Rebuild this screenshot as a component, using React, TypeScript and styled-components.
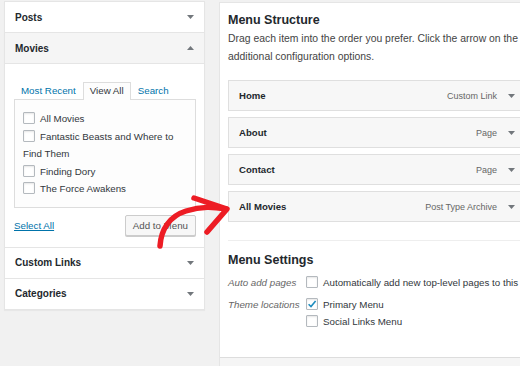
import React from "react";
import styled, { createGlobalStyle } from "styled-components";

const GlobalStyle = createGlobalStyle`
  body {
    margin: 0;
    background: #f1f1f1;
    font-family: "Liberation Sans", Arial, sans-serif;
    color: #23282d;
    overflow: hidden;
  }
`;

const Page = styled.div`
  position: relative;
  display: flex;
  align-items: flex-start;
  padding: 1px 0 0 4px;
  height: 366px;
  box-sizing: border-box;
`;

const Sidebar = styled.div`
  flex: none;
  width: 201px;
  background: #fff;
  border: 1px solid #e5e5e5;
  box-shadow: 0 1px 1px rgba(0, 0, 0, 0.04);
  box-sizing: border-box;
`;

const SectionHeader = styled.div<{ $open?: boolean; $last?: boolean }>`
  display: flex;
  align-items: center;
  justify-content: space-between;
  height: 30px;
  padding: 0 10px;
  font-size: 10px;
  font-weight: bold;
  color: #23282d;
  background: ${(p) => (p.$open ? "#f5f5f5" : "#fff")};
  border-bottom: ${(p) => (p.$last ? "none" : "1px solid #e5e5e5")};
`;

const SectionBody = styled.div`
  padding: 18px 8px 11px 9px;
  border-bottom: 1px solid #e5e5e5;
`;

const TabList = styled.div`
  display: flex;
  margin-bottom: -1px;
`;

const Tab = styled.span<{ $active?: boolean }>`
  position: relative;
  z-index: 1;
  height: 18px;
  box-sizing: border-box;
  padding: 0 6px;
  line-height: 16px;
  font-size: 9.75px;
  border: 1px solid ${(p) => (p.$active ? "#ddd" : "transparent")};
  border-bottom: none;
  background: ${(p) => (p.$active ? "#fdfdfd" : "transparent")};
  color: ${(p) => (p.$active ? "#32373c" : "#0073aa")};
`;

const TabPanel = styled.ul`
  margin: 0;
  list-style: none;
  padding: 10px 8px 9px;
  border: 1px solid #ddd;
  background: #fdfdfd;
`;

const ListItem = styled.li`
  font-size: 9.75px;
  line-height: 17.5px;
  color: #32373c;
`;

const Box = styled.span`
  display: inline-block;
  position: relative;
  width: 12px;
  height: 12px;
  box-sizing: border-box;
  margin-right: 5px;
  vertical-align: -2px;
  border: 1px solid #b4b9be;
  border-radius: 1px;
  background: #fff;
  box-shadow: inset 0 1px 2px rgba(0, 0, 0, 0.1);
`;

const Actions = styled.div`
  display: flex;
  align-items: center;
  justify-content: space-between;
  margin-top: 7px;
`;

const SelectAll = styled.a`
  font-size: 9.75px;
  color: #0073aa;
  text-decoration: underline;
`;

const Button = styled.button`
  height: 21px;
  padding: 0 7px;
  font-family: inherit;
  font-size: 9.75px;
  color: #555;
  background: #f7f7f7;
  border: 1px solid #ccc;
  border-radius: 2px;
  box-shadow: 0 1px 0 #ccc;
`;

const Main = styled.div`
  flex: none;
  display: flex;
  flex-direction: column;
  width: 320px;
  height: 365px;
  margin: 1px 0 0 14px;
  background: #fff;
  border: 1px solid #e5e5e5;
  box-sizing: border-box;
`;

const MainBody = styled.div`
  height: 354px;
  box-sizing: border-box;
  padding: 9px 8px 0;
`;

const Footer = styled.div`
  flex: 1;
  background: #f5f5f5;
  border-top: 1px solid #ddd;
`;

const Heading = styled.h3<{ $gap?: number }>`
  margin: 0 0 ${(p) => p.$gap ?? 0}px;
  font-size: 12.5px;
  line-height: 16px;
  font-weight: bold;
  color: #23282d;
`;

const Instructions = styled.p`
  margin: 2px 0 14px;
  font-size: 10.4px;
  line-height: 18px;
  color: #444;
  white-space: nowrap;
`;

const MenuItem = styled.div`
  display: flex;
  align-items: center;
  justify-content: space-between;
  height: 31px;
  box-sizing: border-box;
  margin-bottom: 6px;
  padding: 0 14px 0 10px;
  background: #f7f7f7;
  border: 1px solid #dfdfdf;
  font-size: 9.6px;
  font-weight: bold;
  color: #23282d;
`;

const ItemControls = styled.span`
  display: flex;
  align-items: center;
  gap: 11px;
  font-size: 9px;
  font-weight: normal;
  color: #666;
`;

const Settings = styled.div`
  margin-top: 18px;
  padding-top: 11px;
  border-top: 1px solid #eee;
`;

const SettingRow = styled.div`
  display: flex;
  margin-bottom: 4px;
  font-size: 9.75px;
  line-height: 17.5px;
`;

const SettingLabel = styled.span`
  flex: none;
  width: 78px;
  font-style: italic;
  color: #666;
  white-space: nowrap;
`;

const Options = styled.div`
  display: flex;
  flex-direction: column;
  color: #32373c;
  white-space: nowrap;
`;

const Overlay = styled.svg`
  position: absolute;
  left: 0;
  top: 0;
  pointer-events: none;
`;

const Caret = ({ up }: { up?: boolean }) => (
  <svg width="7" height="4" viewBox="0 0 7 4">
    <path d={up ? "M0 4 L7 4 L3.5 0 Z" : "M0 0 L7 0 L3.5 4 Z"} fill="#72777c" />
  </svg>
);

const Check = ({ checked }: { checked?: boolean }) => (
  <Box>
    {checked && (
      <svg width="12" height="12" viewBox="0 0 12 12" style={{ position: "absolute", left: -1, top: -1 }}>
        <path d="M2.6 6.2 L5 8.6 L9.6 3" fill="none" stroke="#1e8cbe" strokeWidth="1.6" />
      </svg>
    )}
  </Box>
);

const movies = ["All Movies", "Fantastic Beasts and Where to Find Them", "Finding Dory", "The Force Awakens"];

const items = [
  { title: "Home", type: "Custom Link" },
  { title: "About", type: "Page" },
  { title: "Contact", type: "Page" },
  { title: "All Movies", type: "Post Type Archive" },
];

export default function App() {
  return (
    <Page>
      <GlobalStyle />
      <Sidebar>
        <SectionHeader>
          Posts <Caret />
        </SectionHeader>
        <SectionHeader $open>
          Movies <Caret up />
        </SectionHeader>
        <SectionBody>
          <TabList>
            <Tab>Most Recent</Tab>
            <Tab $active>View All</Tab>
            <Tab>Search</Tab>
          </TabList>
          <TabPanel>
            {movies.map((m) => (
              <ListItem key={m}>
                <Check />
                {m}
              </ListItem>
            ))}
          </TabPanel>
          <Actions>
            <SelectAll>Select All</SelectAll>
            <Button>Add to Menu</Button>
          </Actions>
        </SectionBody>
        <SectionHeader>
          Custom Links <Caret />
        </SectionHeader>
        <SectionHeader $last>
          Categories <Caret />
        </SectionHeader>
      </Sidebar>

      <Main>
        <MainBody>
          <Heading>Menu Structure</Heading>
          <Instructions>
            Drag each item into the order you prefer. Click the arrow on the right of the item to reveal
            <br />
            additional configuration options.
          </Instructions>
          {items.map((it) => (
            <MenuItem key={it.title}>
              {it.title}
              <ItemControls>
                {it.type}
                <Caret />
              </ItemControls>
            </MenuItem>
          ))}
          <Settings>
            <Heading $gap={6}>Menu Settings</Heading>
            <SettingRow>
              <SettingLabel>Auto add pages</SettingLabel>
              <Options>
                <span>
                  <Check />
                  Automatically add new top-level pages to this menu
                </span>
              </Options>
            </SettingRow>
            <SettingRow>
              <SettingLabel>Theme locations</SettingLabel>
              <Options>
                <span>
                  <Check checked />
                  Primary Menu
                </span>
                <span>
                  <Check />
                  Social Links Menu
                </span>
              </Options>
            </SettingRow>
          </Settings>
        </MainBody>
        <Footer />
      </Main>

      <Overlay width="520" height="366" viewBox="0 0 520 366">
        <g fill="none" stroke="#ed1c24" strokeWidth="5.5" strokeLinecap="round" strokeLinejoin="round">
          <path d="M160 246 C161 229 170 216 186 211 S213 207 226 209" />
          <path d="M194 198 L227 209 L207 232" />
        </g>
      </Overlay>
    </Page>
  );
}
